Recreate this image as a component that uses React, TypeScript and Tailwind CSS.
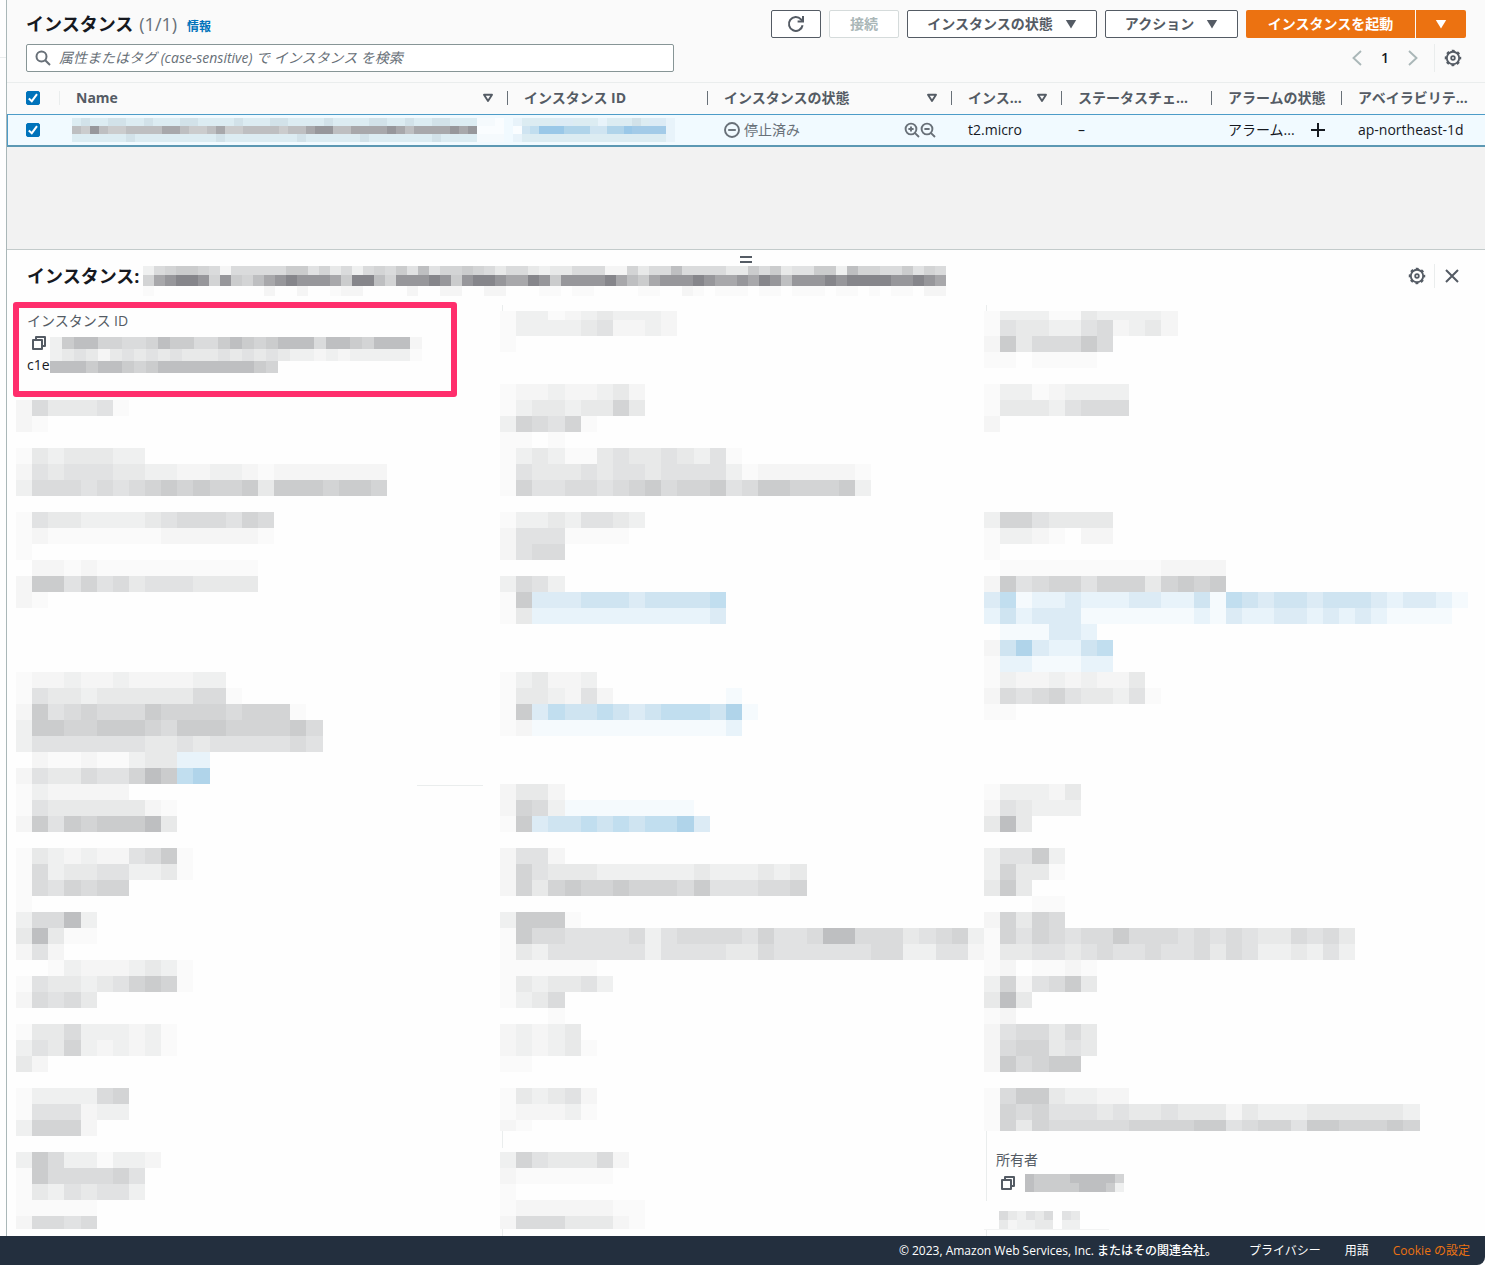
import React, { useState } from 'react';

// Shades used by the masked (mosaic) values. Digits go from light to dark grey.
const shades: Record<string, string> = {
  '1': '#fafafa',
  '2': '#f5f5f5',
  '3': '#eff0f0',
  '4': '#e8e9e9',
  '5': '#e1e2e3',
  '6': '#dadbdc',
  '7': '#d3d4d5',
  '8': '#cbcccd',
  '9': '#bebfc1',
  x: '#a8a8ab',
  y: '#97979b',
  z: '#86868b',
  w: '#fafdff',
  a: '#f5fafd',
  b: '#e8f3fa',
  c: '#dcebf5',
  d: '#cfe4f1',
  e: '#c1deef',
  f: '#b0d4ea',
  g: '#a3cbe8',
  h: '#9ac8e8',
  p: '#dcecf2',
  q: '#d2e2e9',
};

interface MosaicProps {
  rows: string[];
  cols?: number;
  rowHeight?: number;
  className?: string;
  children?: React.ReactNode;
}

const Mosaic: React.FC<MosaicProps> = ({ rows, cols = 30, rowHeight = 16, className = 'w-full', children }) => (
  <svg
    aria-hidden="true"
    className={`block shrink-0 ${className}`}
    height={rows.length * rowHeight}
    viewBox={`0 0 ${cols} ${rows.length}`}
    preserveAspectRatio="none"
    shapeRendering="crispEdges"
  >
    {rows.map((row, y) =>
      row.split('').map((cell, x) =>
        shades[cell] ? <rect key={`${x}-${y}`} x={x} y={y} width={1} height={1} fill={shades[cell]} /> : null
      )
    )}
    {children}
  </svg>
);

const titleMask = [
  '3678876266666885746367685957787646643446662274669666644868455883977668576',
  '7xyzzy7y879xyzyyyx8zz97yyyzy8yzzyxxzy8yyyyzx98xyyyzyxxyxzy9yyyzyzzzzyyzyx',
  '1..........2..2..122....2..22..22...11.11....11..21.111.11.111.11.1.11.22',
];

const nameMask = [
  'pqppqqppqpppqqppppqpppqqppppqppppqqppqppqqpppaaw',
  '98y9889999xx9889x889999899xyy99xxxxyx9xxxxyxywww',
  'ppppppqpppppppppqppppppppqppppppqpppppppqppppaaa',
];

const idMask = [
  'bppppccpppbpppqpccb',
  'wdehhhfffddffhggggb',
  'bpppppppppppppppppb',
];

const instanceIdMask = [
  '3899776679886689878999699879992',
  '3454245454544454545433232333331',
  '9998998789999999987............',
];

const column1 = [
  '2644451',
  '21',
  '',
  '14344433',
  '25455544332233212222222',
  '36665656787877848887887',
  '',
  '1544333345666576',
  '1211111112222221',
  '1',
  '.22121111111111',
  '288575645554444',
  '21',
  '',
  '',
  '',
  '',
  '1223223222233',
  '15443444444661',
  '285676668777767771',
  '3887788876888777786',
  '3555555544545555565',
  '.211211344bb',
  '2544655798ef',
  '1322222',
  '1544444421',
  '2858788894',
  '',
  '14323225681',
  '16344553341',
  '1657677',
  '1',
  '36693',
  '49411',
  '252',
  '..132223431',
  '15443457871',
  '26564',
  '',
  '1446333231',
  '3547323231',
  '42',
  '',
  '1333367',
  '1555233',
  '37772',
  '',
  '386331332',
  '18666675',
  '14354553',
  '11111',
];

const column2 = [
  '13333452232',
  '1',
  '',
  '',
  '122322342',
  '134434474',
  '376571',
  '11.1',
  '134311454454351',
  '15444545545555312222221',
  '17556656786778568877783',
  '',
  '133435543',
  '25551111',
  '2566',
  '',
  '3653',
  '18cccdddcdddde',
  '14bbbbbbbbbbbc',
  '',
  '',
  '',
  '134223',
  '1443252.......a',
  '18ceddedcdeeedfa',
  '12aaaaaaaaaaaab',
  '',
  '',
  '',
  '2442',
  '2763aaaaaaaa',
  '18cddededeefc',
  '',
  '2552',
  '2754443333334333434',
  '2747877877768555667',
  '',
  '38881',
  '186655556356666575569966645673',
  '143555555355554465555556633552',
  '111111',
  '1434453',
  '1346',
  '...1',
  '23234',
  '232341',
  '11',
  '',
  '143452',
  '122231',
];

const column3 = [
  '154433562342',
  '28466686',
  '11.1111',
  '',
  '133123333',
  '144435666',
  '2',
  '',
  '',
  '',
  '',
  '',
  '37754444',
  '13321.22',
  '1',
  '.11111111112222',
  '285677577747878',
  'ceabbcbbbccbbdaedcddcdddcbccba',
  'bdbcccaaaaaaabacbbccbcbcbaaaa.',
  '.aaaccb',
  '2dfcbbde',
  '1bbaaabb',
  '1322323224',
  '26567544351',
  '11',
  '',
  '',
  '',
  '',
  '133324',
  '254333',
  '494',
  '',
  '35583',
  '37441',
  '484',
  '...11',
  '27476',
  '17576566866656565446564',
  '14455456556556465334353',
  '12.1121',
  '3725684',
  '494',
  '12',
  '2566464',
  '2677454',
  '286788',
  '',
  '168843322',
  '176755545445444243334444443',
];

const GearIcon = () => (
  <svg width="18" height="18" viewBox="0 0 18 18" fill="none" stroke="#545b64">
    <circle cx="9" cy="9" r="6.2" strokeWidth="1.9" />
    <circle cx="9" cy="9" r="7.4" strokeWidth="1.7" strokeDasharray="2.9 2.912" strokeDashoffset="1.45" />
    <circle cx="9" cy="9" r="1.8" strokeWidth="1.8" />
  </svg>
);

const CopyIcon = () => (
  <svg width="14" height="14" viewBox="0 0 14 14" fill="none" stroke="#545b64" strokeWidth="2">
    <path d="M4 4V1h9v9h-3" strokeLinejoin="round" />
    <path d="M1 4h9v9H1z" strokeLinejoin="round" />
  </svg>
);

const CaretIcon: React.FC<{ hollow?: boolean }> = ({ hollow }) => (
  <svg width="12" height="10" viewBox="0 0 12 10" className="shrink-0">
    {hollow ? (
      <path d="M2 1.8h8L6 8z" fill="none" stroke="#545b64" strokeWidth="1.9" strokeLinejoin="round" />
    ) : (
      <path d="M.8 1h10.4L6 9.4z" fill="currentColor" />
    )}
  </svg>
);

const ZoomIcon: React.FC<{ plus?: boolean }> = ({ plus }) => (
  <svg width="16" height="16" viewBox="0 0 16 16" fill="none" stroke="#687078" strokeWidth="1.9">
    <circle cx="7" cy="7" r="5.4" />
    <path d="M10.8 10.8L15 15M4.4 7h5.2" />
    {plus && <path d="M7 4.4v5.2" />}
  </svg>
);

const Checkbox: React.FC<{ label: string }> = ({ label }) => {
  const [checked, setChecked] = useState(true);
  return (
    <label className="grid h-[14px] w-[14px]">
      <input
        type="checkbox"
        aria-label={label}
        checked={checked}
        onChange={() => setChecked(!checked)}
        className="col-start-1 row-start-1 h-[14px] w-[14px] appearance-none rounded-[2px] border border-[#0073bb] bg-white checked:bg-[#0073bb]"
      />
      {checked && (
        <svg viewBox="0 0 14 14" className="pointer-events-none col-start-1 row-start-1" fill="none" stroke="#fff" strokeWidth="2">
          <path d="M2.8 7.4l3 2.8 5.2-7" />
        </svg>
      )}
    </label>
  );
};

interface HeadCellProps {
  children: React.ReactNode;
  sortable?: boolean;
}

const HeadCell: React.FC<HeadCellProps> = ({ children, sortable }) => (
  <th scope="col" className="p-0 pb-0.5 text-left font-bold">
    <div className="flex h-[14px] items-center justify-between border-l border-[#687078] pl-4 pr-[13px] whitespace-nowrap">
      <span>{children}</span>
      {sortable && <CaretIcon hollow />}
    </div>
  </th>
);

const Toolbar = () => (
  <div className="flex h-7 items-center justify-between">
    <h1 className="flex items-baseline text-lg leading-7 font-bold text-[#16191f]">
      インスタンス
      <span className="ml-1.5 font-normal text-[#687078]">(1/1)</span>
      <a href="#" className="ml-2.5 text-xs font-bold text-[#0073bb]">情報</a>
    </h1>
    <div className="flex gap-2 text-sm font-bold text-[#545b64]">
      <button aria-label="更新" className="flex h-7 w-[50px] items-center justify-center rounded-[2px] border border-[#545b64] bg-white">
        <svg width="18" height="18" viewBox="0 0 18 18" fill="none" stroke="#545b64" strokeWidth="2">
          <path d="M15.6 10.2A6.9 6.9 0 1 1 14 4.4l1.6 1.8" />
          <path d="M16 1v5.6h-5.4" />
        </svg>
      </button>
      <button disabled className="h-7 w-[70px] rounded-[2px] border border-[#d5dbdb] bg-white text-[#aab7b8]">接続</button>
      <button className="flex h-7 w-[190px] items-center justify-center gap-3 rounded-[2px] border border-[#545b64] bg-white whitespace-nowrap">
        インスタンスの状態
        <CaretIcon />
      </button>
      <button className="flex h-7 w-[133px] items-center justify-center gap-3 rounded-[2px] border border-[#545b64] bg-white whitespace-nowrap">
        アクション
        <CaretIcon />
      </button>
      <div className="flex gap-px text-white">
        <button className="h-7 w-[169px] rounded-l-[2px] bg-[#ec7211] whitespace-nowrap">インスタンスを起動</button>
        <button aria-label="起動オプション" className="flex h-7 w-[50px] items-center justify-center rounded-r-[2px] bg-[#ec7211]">
          <CaretIcon />
        </button>
      </div>
    </div>
  </div>
);

const SearchBar = () => (
  <div className="mt-1.5 flex h-7 items-center justify-between">
    <label className="flex h-7 w-[648px] items-center gap-2 rounded-[2px] border border-[#879596] bg-white px-2">
      <svg width="16" height="16" viewBox="0 0 16 16" fill="none" stroke="#687078" strokeWidth="2" className="shrink-0">
        <circle cx="6.5" cy="6.5" r="5" />
        <path d="M10.2 10.2L15 15" />
      </svg>
      <input
        type="text"
        aria-label="インスタンスを検索"
        placeholder="属性またはタグ (case-sensitive) で インスタンス を検索"
        className="min-w-0 flex-1 bg-transparent text-sm italic outline-none placeholder:text-[#687078]"
      />
    </label>
    <div className="flex items-center pr-1">
      <button aria-label="前のページ">
        <svg width="10" height="16" viewBox="0 0 10 16" fill="none" stroke="#aab7b8" strokeWidth="1.9">
          <path d="M9 1L1.5 8 9 15" />
        </svg>
      </button>
      <span className="w-[46px] text-center text-sm font-semibold text-[#16191f]">1</span>
      <button aria-label="次のページ">
        <svg width="10" height="16" viewBox="0 0 10 16" fill="none" stroke="#aab7b8" strokeWidth="1.9">
          <path d="M1 1l7.5 7L1 15" />
        </svg>
      </button>
      <span className="ml-4 h-7 border-l border-[#eaeded]"></span>
      <button aria-label="設定" className="ml-[9px]">
        <GearIcon />
      </button>
    </div>
  </div>
);

const InstanceTable = () => (
  <table className="w-full table-fixed border-separate border-spacing-0 text-sm leading-5">
    <colgroup>
      <col className="w-[52px]" />
      <col className="w-[448px]" />
      <col className="w-[200px]" />
      <col className="w-[244px]" />
      <col className="w-[110px]" />
      <col className="w-[150px]" />
      <col className="w-[130px]" />
      <col />
    </colgroup>
    <thead>
      <tr className="h-[31px] bg-[#fafafa] text-[#545b64]">
        <th scope="col" className="p-0 pb-0.5 pl-[19px]">
          <Checkbox label="すべて選択" />
        </th>
        <th scope="col" className="p-0 pb-0.5 text-left font-bold">
          <div className="flex h-[14px] items-center justify-between border-l border-[#eaeded] pl-4 pr-[13px]">
            <span>Name</span>
            <CaretIcon hollow />
          </div>
        </th>
        <HeadCell>インスタンス ID</HeadCell>
        <HeadCell sortable>インスタンスの状態</HeadCell>
        <HeadCell sortable>インス...</HeadCell>
        <HeadCell>ステータスチェ...</HeadCell>
        <HeadCell>アラームの状態</HeadCell>
        <HeadCell>アベイラビリテ...</HeadCell>
      </tr>
    </thead>
    <tbody>
      <tr className="h-[33px] bg-[#f1faff] text-[#16191f] *:border-t *:border-b-2 *:border-t-[#4d9cc8] *:border-b-[#5c98b3]">
        <td className="border-l border-l-[#4d9cc8] p-0 pl-[18px]">
          <Checkbox label="インスタンスを選択" />
        </td>
        <td className="p-0 pl-[13px]">
          <Mosaic rows={nameMask} cols={48} rowHeight={8} className="w-[432px]" />
        </td>
        <td className="p-0 pl-1.5">
          <Mosaic rows={idMask} cols={19} rowHeight={8} className="w-[162px]" />
        </td>
        <td className="p-0 pl-[17px] pr-[15px]">
          <div className="flex items-center gap-1 text-[#687078]">
            <svg width="16" height="16" viewBox="0 0 16 16" fill="none" stroke="#687078" strokeWidth="1.9">
              <circle cx="8" cy="8" r="7" />
              <path d="M4.2 8h7.6" />
            </svg>
            <span>停止済み</span>
            <button aria-label="フィルターに追加" className="ml-auto -mr-1">
              <ZoomIcon plus />
            </button>
            <button aria-label="フィルターから除外">
              <ZoomIcon />
            </button>
          </div>
        </td>
        <td className="p-0 pl-[17px]">t2.micro</td>
        <td className="p-0 pl-[17px]">–</td>
        <td className="p-0 pl-[17px] pr-4">
          <div className="flex items-center justify-between whitespace-nowrap">
            <span>アラーム...</span>
            <button aria-label="アラームを追加">
              <svg width="14" height="14" viewBox="0 0 14 14" stroke="#16191f" strokeWidth="2">
                <path d="M7 0v14M0 7h14" />
              </svg>
            </button>
          </div>
        </td>
        <td className="p-0 pl-[17px] whitespace-nowrap">ap-northeast-1d</td>
      </tr>
    </tbody>
  </table>
);

const DetailPanel = () => (
  <section className="border-t border-[#c3cbcb] bg-[#fefefe]">
    <div className="flex h-4 flex-col items-center gap-[3px] pt-1.5">
      <span className="h-0.5 w-3 bg-[#545b64]"></span>
      <span className="h-0.5 w-3 bg-[#545b64]"></span>
    </div>
    <div className="flex h-9 items-start justify-between pl-5 pr-[26px]">
      <div className="flex gap-1">
        <h2 className="text-lg leading-5 font-bold whitespace-nowrap text-[#16191f]">インスタンス:</h2>
        <div>
          <Mosaic rows={[titleMask[0]]} cols={73} rowHeight={9} className="w-[803px]" />
          <Mosaic rows={[titleMask[1]]} cols={73} rowHeight={11} className="w-[803px]" />
          <Mosaic rows={[titleMask[2]]} cols={73} rowHeight={10} className="w-[803px]" />
        </div>
      </div>
      <div className="flex h-5 items-center">
        <button aria-label="パネル設定">
          <GearIcon />
        </button>
        <span className="ml-2 h-6 border-l border-[#eaeded]"></span>
        <button aria-label="閉じる" className="ml-2.5">
          <svg width="14" height="14" viewBox="0 0 14 14" stroke="#545b64" strokeWidth="2">
            <path d="M1 1l12 12M13 1L1 13" />
          </svg>
        </button>
      </div>
    </div>

    <div className="grid grid-cols-3 pl-[9px] pr-[17px]">
      <div>
        {/* Instance ID, framed by the marker */}
        <div className="relative h-[98px] pl-[11px] pt-[9px]">
          <div className="absolute -left-[3px] top-0 h-[95px] w-[444px] rounded-[3px] border-[6px] border-[#ff2e6c]"></div>
          <p className="text-sm leading-5 text-[#545b64]">インスタンス ID</p>
          <div className="mt-1 flex">
            <div className="w-[23px] text-sm leading-5 text-[#16191f]">
              <button aria-label="コピー" className="mt-px mb-[5px] ml-[5px] block">
                <CopyIcon />
              </button>
              c1e
            </div>
            <div className="pt-0.5">
              <Mosaic rows={instanceIdMask} cols={31} rowHeight={12} className="w-[372px]" />
            </div>
          </div>
        </div>
        <Mosaic rows={column1}>
          <rect x={24.85} y={24.07} width={4.1} height={0.06} fill="#eaeded" />
        </Mosaic>
        <Mosaic rows={['26656']} rowHeight={13} />
      </div>

      <div className="pt-[3px]">
        <div className="ml-0.5 h-1.5 border-l border-[#eaeded]"></div>
        <Mosaic rows={['13312343332']} rowHeight={9} />
        <Mosaic rows={column2} />
        <Mosaic rows={['21']} rowHeight={11} />
        <div className="mb-1 ml-0.5 h-[17px] border-l border-[#eaeded]"></div>
        <Mosaic rows={['37544462', '2111111', '1', '122222211']} />
        <Mosaic rows={['266644421']} rowHeight={13} />
        <div className="ml-0.5 h-[7px] border-l border-[#eaeded]"></div>
      </div>

      <div className="pt-[3px]">
        <div className="ml-0.5 h-1.5 border-l border-[#eaeded]"></div>
        <Mosaic rows={['133311433332']} rowHeight={9} />
        <Mosaic rows={column3} />
        <Mosaic rows={['174766666777788567758877787']} rowHeight={11} />
        <div className="ml-0.5 border-l border-[#eaeded] pb-[9px] pl-[9px] pt-[19px]">
          <p className="text-sm leading-5 text-[#545b64]">所有者</p>
          <div className="mt-1 flex h-[18px] items-center gap-2.5 pl-[5px]">
            <button aria-label="所有者をコピー">
              <CopyIcon />
            </button>
            <Mosaic rows={['98888999997', '98888899983']} cols={11} rowHeight={9} className="w-[99px]" />
          </div>
        </div>
        <div className="pl-[15px] pt-[10px]">
          <Mosaic rows={['643546.54', '423344.33']} cols={9} rowHeight={9} className="w-[81px]" />
        </div>
        <div className="w-[125px] border-t border-[#f2f3f3]"></div>
        <div className="ml-0.5 h-1.5 border-l border-[#eaeded]"></div>
      </div>
    </div>
  </section>
);

const App: React.FC = () => {
  return (
    <div className="min-w-[1280px] bg-white font-['Open_Sans','Noto_Sans_CJK_JP',sans-serif]">
      <div className="flex">
        <aside className="w-[7px] shrink-0 border-r border-[#aab7b8] bg-[#fefefe]">
          <div className="h-[58px] border-b border-[#eaeded]"></div>
        </aside>
        <main className="min-w-0 flex-1 overflow-hidden bg-[#f2f2f2]">
          <header className="border-b border-[#eaeded] bg-[#fafafa] px-[19px] py-2.5">
            <Toolbar />
            <SearchBar />
          </header>
          <InstanceTable />
          <div className="h-[102px]"></div>
          <DetailPanel />
        </main>
      </div>
      <footer className="flex h-[29px] items-center justify-end rounded-br-lg bg-[#232f3e] pr-[15px] text-xs text-white">
        <span className="font-medium">© 2023, Amazon Web Services, Inc. またはその関連会社。</span>
        <a href="#" className="ml-8">プライバシー</a>
        <a href="#" className="ml-6">用語</a>
        <a href="#" className="ml-6 text-[#ec7211]">Cookie の設定</a>
      </footer>
    </div>
  );
};

export default App;
